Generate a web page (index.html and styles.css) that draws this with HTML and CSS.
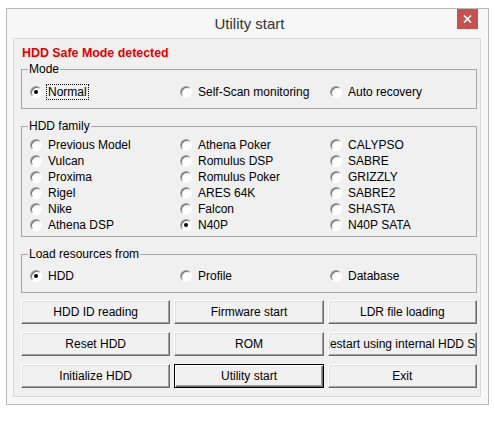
FILE: index.html
```html
<!DOCTYPE html>
<html lang="en">
<head>
    <meta charset="UTF-8">
    <title>Utility start</title>
    <link rel="stylesheet" href="styles.css">
</head>
<body>

<div class="window">
    <div class="titlebar">
        <span class="title">Utility start</span>
        <div class="close">
            <svg width="9" height="8" viewBox="0 0 9 8"><path d="M1 0.5 L8 7.5 M8 0.5 L1 7.5" stroke="#fff" stroke-width="1.7"/></svg>
        </div>
    </div>

    <div class="client">
        <div class="warning">HDD Safe Mode detected</div>

        <fieldset class="group mode">
            <legend>Mode</legend>
            <div class="options">
                <label class="option"><span class="radio checked"></span><span class="focus">Normal</span></label>
                <label class="option"><span class="radio"></span>Self-Scan monitoring</label>
                <label class="option"><span class="radio"></span>Auto recovery</label>
            </div>
        </fieldset>

        <fieldset class="group family">
            <legend>HDD family</legend>
            <div class="options">
                <label class="option"><span class="radio"></span>Previous Model</label>
                <label class="option"><span class="radio"></span>Athena Poker</label>
                <label class="option"><span class="radio"></span>CALYPSO</label>
                <label class="option"><span class="radio"></span>Vulcan</label>
                <label class="option"><span class="radio"></span>Romulus DSP</label>
                <label class="option"><span class="radio"></span>SABRE</label>
                <label class="option"><span class="radio"></span>Proxima</label>
                <label class="option"><span class="radio"></span>Romulus Poker</label>
                <label class="option"><span class="radio"></span>GRIZZLY</label>
                <label class="option"><span class="radio"></span>Rigel</label>
                <label class="option"><span class="radio"></span>ARES 64K</label>
                <label class="option"><span class="radio"></span>SABRE2</label>
                <label class="option"><span class="radio"></span>Nike</label>
                <label class="option"><span class="radio"></span>Falcon</label>
                <label class="option"><span class="radio"></span>SHASTA</label>
                <label class="option"><span class="radio"></span>Athena DSP</label>
                <label class="option"><span class="radio checked"></span>N40P</label>
                <label class="option"><span class="radio"></span>N40P SATA</label>
            </div>
        </fieldset>

        <fieldset class="group load">
            <legend>Load resources from</legend>
            <div class="options">
                <label class="option"><span class="radio checked"></span>HDD</label>
                <label class="option"><span class="radio"></span>Profile</label>
                <label class="option"><span class="radio"></span>Database</label>
            </div>
        </fieldset>

        <div class="buttons">
            <button class="btn"><span>HDD ID reading</span></button>
            <button class="btn"><span>Firmware start</span></button>
            <button class="btn"><span>LDR file loading</span></button>
            <button class="btn"><span>Reset HDD</span></button>
            <button class="btn"><span>ROM</span></button>
            <button class="btn"><span>Restart using internal HDD SA</span></button>
            <button class="btn"><span>Initialize HDD</span></button>
            <button class="btn default"><span>Utility start</span></button>
            <button class="btn"><span>Exit</span></button>
        </div>
    </div>
</div>

</body>
</html>
```

FILE: styles.css
```css
/* dialog window */
body {
    margin: 0;
    background: #fff;
    font-family: "Liberation Sans", Arial, sans-serif;
    font-size: 12px;
    color: #000;
}

.window {
    margin: 8px 0 0 6px;
    width: 483px;
    box-sizing: border-box;
    border: 1px solid #b9b9b9;
    background: #f7f7f7;
    padding: 0 7px 7px 6px;
}

.titlebar {
    position: relative;
    height: 29px;
    line-height: 30px;
    text-align: center;
    padding-left: 5px;
}

.title {
    font-size: 15px;
    color: #333;
}

.close {
    position: absolute;
    top: 0;
    right: 3px;
    width: 21px;
    height: 20px;
    background: #c75050;
    display: flex;
    align-items: center;
    justify-content: center;
}

.close svg {
    display: block;
}

.client {
    border: 1px solid #dadada;
    background: #f0f0f0;
    padding: 7px 3px 8px 7px;
}

.warning {
    color: #e00000;
    font-weight: bold;
    font-size: 12.4px;
    line-height: 14px;
    height: 14px;
    padding-left: 1px;
}

/* group boxes */
.group {
    margin: 10px 0 0;
    border: 1px solid #a6a6a6;
    padding: 0 0 0 8px;
    min-width: 0;
}

.group legend {
    margin-left: -2px;
    padding: 0 1px;
    line-height: 14px;
}

.mode {
    margin-top: 2px;
    padding-top: 9px;
    padding-bottom: 9px;
}

.family {
    padding-top: 4px;
    padding-bottom: 3px;
}

.load {
    padding-top: 8px;
    padding-bottom: 9px;
}

.options {
    display: grid;
    grid-template-columns: 150px 150px 1fr;
}

.option {
    display: flex;
    align-items: center;
    gap: 6px;
    height: 14px;
    white-space: nowrap;
}

.family .option {
    height: 16px;
}

.radio {
    width: 12px;
    height: 12px;
    box-sizing: border-box;
    border-radius: 50%;
    border: 1px solid;
    border-color: #a0a0a0 #fff #fff #a0a0a0;
    background: #fff;
    box-shadow: inset 1px 1px 0 #696969;
    display: flex;
    align-items: center;
    justify-content: center;
    flex-shrink: 0;
}

.radio.checked::after {
    content: "";
    width: 4px;
    height: 4px;
    border-radius: 50%;
    background: #000;
}

.focus {
    outline: 1px dotted #000;
    padding: 0 1px;
    margin-left: -1px;
}

/* push buttons */
.buttons {
    margin-top: 7px;
    display: grid;
    grid-template-columns: repeat(3, 1fr);
    gap: 8px 4px;
}

.btn {
    height: 24px;
    margin: 0;
    padding: 0;
    font-family: inherit;
    font-size: 12px;
    color: #000;
    background: #f0f0f0;
    border: 1px solid;
    border-color: #fff #696969 #696969 #fff;
    box-shadow: inset -1px -1px 0 #a0a0a0, inset 1px 1px 0 #e3e3e3;
    display: flex;
    align-items: center;
    justify-content: center;
    overflow: hidden;
    white-space: nowrap;
}

.btn span {
    flex-shrink: 0;
}

.btn.default {
    border-color: #000;
    box-shadow: inset 1px 1px 0 #fff, inset -1px -1px 0 #696969, inset -2px -2px 0 #a0a0a0;
}
```
